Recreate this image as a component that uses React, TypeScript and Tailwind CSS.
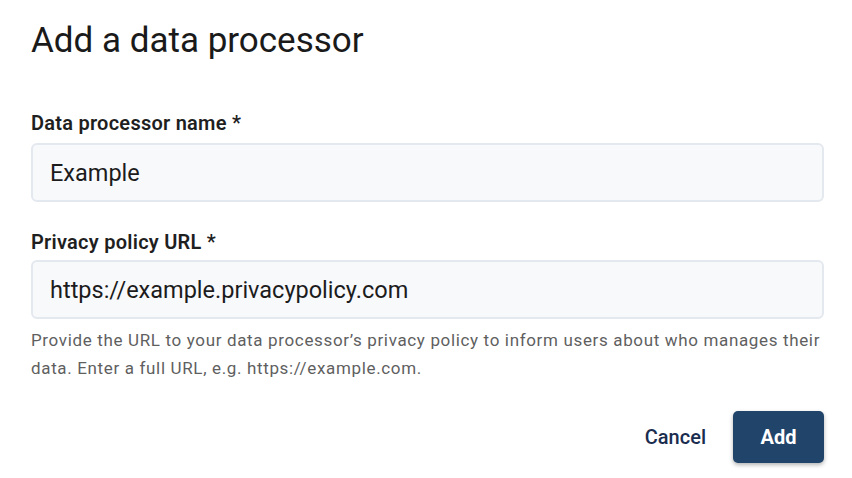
import React, { useState } from 'react';

export default function App() {
  const [name, setName] = useState('Example');
  const [url, setUrl] = useState('https://example.privacypolicy.com');

  return (
    <div
      className="w-[852px] h-[478px] bg-white pl-[31px] pr-[28px] pt-[19px] text-[#1c1c1c]"
      style={{ fontFamily: 'Roboto, "Liberation Sans", sans-serif' }}
    >
      <h1 className="text-[35px] leading-[44px] font-normal text-[#1a1a1a]">Add a data processor</h1>

      {/* name field */}
      <label className="block mt-[48px] text-[20px] leading-[24px] tracking-[0.25px] font-semibold text-[#1f1f1f]">
        Data processor name *
      </label>
      <input
        value={name}
        onChange={(e) => setName(e.target.value)}
        className="mt-[8px] block w-full h-[59px] rounded-[6px] border-2 border-[#e4e8ef] bg-[#f8f9fb] px-[17px] text-[23.5px] text-[#1c1c1c] outline-none"
      />

      {/* privacy policy field */}
      <label className="block mt-[28px] text-[20px] leading-[24px] tracking-[0.25px] font-semibold text-[#1f1f1f]">
        Privacy policy URL *
      </label>
      <input
        value={url}
        onChange={(e) => setUrl(e.target.value)}
        className="mt-[6px] block w-full h-[59px] rounded-[6px] border-2 border-[#e4e8ef] bg-[#f8f9fb] px-[17px] text-[23.5px] text-[#1c1c1c] outline-none"
      />
      <p className="mt-[7px] text-[17px] leading-[28px] tracking-[0.65px] text-[#5f5f5f]">
        Provide the URL to your data processor’s privacy policy to inform users about who manages their
        data. Enter a full URL, e.g. https://example.com.
      </p>

      <div className="mt-[29px] flex items-center justify-end gap-[27px]">
        <button className="text-[20px] font-medium text-[#1b2d4f]">Cancel</button>
        <button className="w-[91px] h-[52px] rounded-[5px] bg-[#21446a] text-[20px] font-bold text-white shadow-[0_2px_4px_rgba(0,0,0,0.3)]">
          Add
        </button>
      </div>
    </div>
  );
}
